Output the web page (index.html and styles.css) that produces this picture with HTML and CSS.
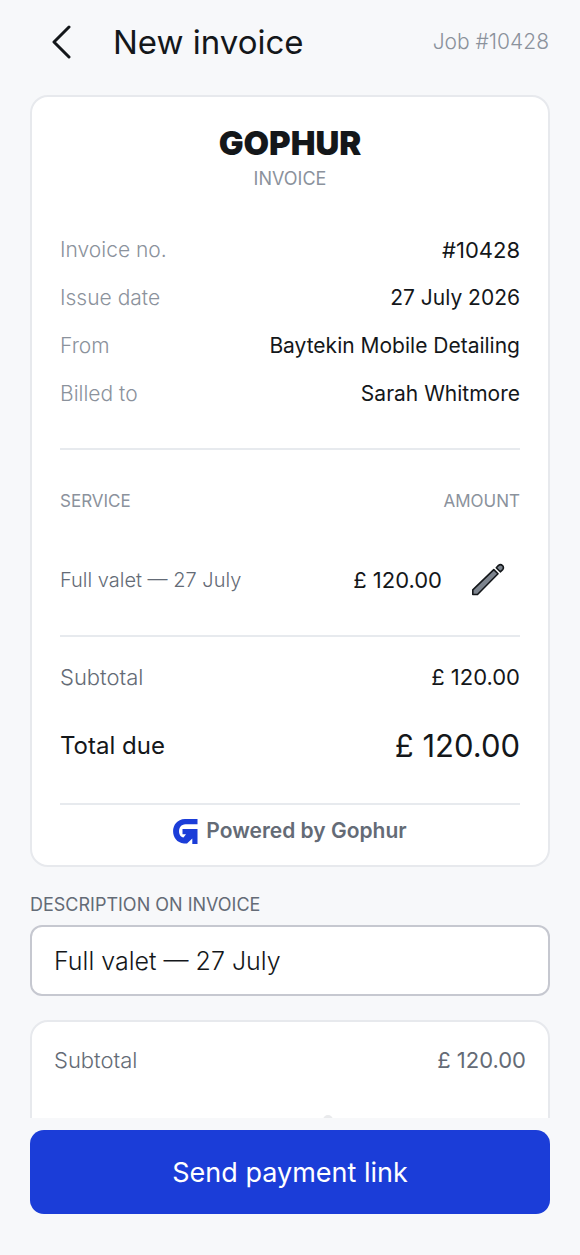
FILE: index.html
```html
<!DOCTYPE html>
<html lang="en-GB">
<head>
  <meta charset="utf-8">
  <meta name="viewport" content="width=device-width, initial-scale=1">
  <title>New invoice</title>
  <link rel="stylesheet" href="styles.css">
</head>
<body>
  <header class="topbar">
    <button class="back" type="button" aria-label="Back">
      <svg width="20" height="34" viewBox="0 0 20 34" fill="none" stroke="currentColor" stroke-width="3" stroke-linecap="round" stroke-linejoin="round"><path d="M17 2 2 17l15 15"/></svg>
    </button>
    <h1 class="title">New invoice</h1>
    <span class="job">Job #10428</span>
  </header>

  <main class="content">
    <article class="card invoice">
      <div class="brand">GOPHUR</div>
      <h2 class="kind">INVOICE</h2>

      <dl class="details">
        <div class="row"><dt>Invoice no.</dt><dd class="figure">#10428</dd></div>
        <div class="row"><dt>Issue date</dt><dd>27 July 2026</dd></div>
        <div class="row"><dt>From</dt><dd>Baytekin Mobile Detailing</dd></div>
        <div class="row"><dt>Billed to</dt><dd>Sarah Whitmore</dd></div>
      </dl>

      <table class="services">
        <thead>
          <tr><th class="name" scope="col">SERVICE</th><th class="amount" scope="col" colspan="2">AMOUNT</th></tr>
        </thead>
        <tbody>
          <tr>
            <td class="name">Full valet — 27 July</td>
            <td class="amount">£ 120.00</td>
            <td class="action">
              <button class="edit" type="button" aria-label="Edit amount">
                <svg width="34" height="34" viewBox="0 0 34 34" fill="#7d848e" stroke="#14171a" stroke-width="1.600" stroke-linejoin="round"><path d="M1.800 31.500v-4.700L22.800 6.600l4.200 4.200L6.500 31.500zM25.300 4.800l2.200-2.400q2-1.500 4 .2 1.700 2 .2 4l-2.400 2.200z"/></svg>
              </button>
            </td>
          </tr>
        </tbody>
      </table>

      <dl class="totals">
        <div class="row"><dt>Subtotal</dt><dd>£ 120.00</dd></div>
        <div class="row due"><dt>Total due</dt><dd>£ 120.00</dd></div>
      </dl>

      <footer class="powered">
        <svg width="25" height="25" viewBox="0 0 25 25" fill="#1b3dd8" aria-hidden="true"><path d="M12 0h12.500v5.200H12.500C4 5.200 4.500 18.500 10.500 18.500l2.500-3.200H9.500V10h15v15h-5.200v-5.500L14 24.500h-3C-3.700 23.500-3.700.5 12 0z"/></svg>
        <span>Powered by Gophur</span>
      </footer>
    </article>

    <div class="field">
      <label for="description">DESCRIPTION ON INVOICE</label>
      <input id="description" type="text" value="Full valet — 27 July">
    </div>

    <section class="card summary">
      <div class="row"><span>Subtotal</span><span class="value">£ 120.00</span></div>
      <svg class="dot" width="10" height="10" viewBox="0 0 10 10" fill="#e9eaec" aria-hidden="true"><circle cx="5" cy="5" r="5"/></svg>
    </section>
  </main>

  <div class="actions">
    <button class="send" type="button">Send payment link</button>
  </div>
</body>
</html>
```
FILE: styles.css
```css
* { box-sizing: border-box; }

body {
  display: flex;
  flex-direction: column;
  height: 100vh;
  margin: 0;
  background: #f7f8fa;
  color: #14171a;
  font: 300 22px/28px Inter, "Liberation Sans", sans-serif;
}

button, input { font: inherit; color: inherit; }
h1, h2, dl, dd { margin: 0; }

.topbar {
  display: flex;
  flex: none;
  align-items: center;
  padding: 16px 31px 27px 30px;
}

.back {
  display: flex;
  justify-content: center;
  width: 64px;
  padding: 9px 0;
  border: 0;
  background: none;
}

.title {
  flex: 1;
  margin-left: 19px;
  font-size: 33px;
  font-weight: 400;
  line-height: 40px;
}

.job { color: #8b929c; font-size: 21px; }

.content {
  flex: 1;
  min-height: 0;
  padding: 0 30px;
  overflow: hidden;
}

.card {
  border: 2px solid #e7e9ed;
  border-radius: 18px;
  background: #fff;
}

.invoice { padding: 28px 28px 20px; }

.brand {
  font-size: 33px;
  font-weight: 900;
  line-height: 36px;
  text-align: center;
}

.kind {
  margin-top: 8px;
  color: #8b929c;
  font-size: 18px;
  font-weight: 400;
  line-height: 20px;
  text-align: center;
}

.row {
  display: flex;
  align-items: center;
  justify-content: space-between;
}

.details {
  display: grid;
  gap: 20px;
  padding: 47px 0 40px;
  border-bottom: 2px solid #e7eaee;
  font-size: 21px;
}

.details dt { color: #8b929c; }
.details dd { font-weight: 400; }
.details .figure { font-size: 22px; }

.services {
  width: 100%;
  border-collapse: collapse;
  border-bottom: 2px solid #e7eaee;
}

.services th {
  padding: 41px 0 37px;
  color: #8b929c;
  font-size: 17px;
  font-weight: 400;
  line-height: 20px;
}

.services td { padding: 0 0 23px; }
.services .name { text-align: left; }
.services td.name { color: #646b76; font-size: 20px; }
.services .amount { text-align: right; }
.services td.amount { font-weight: 400; }
.services .action { width: 78px; padding-left: 14px; }

.edit {
  display: flex;
  align-items: center;
  justify-content: center;
  width: 64px;
  height: 64px;
  padding: 0;
  border: 0;
  background: none;
}

.totals {
  display: grid;
  gap: 35px;
  padding: 26px 0 37px;
  border-bottom: 2px solid #e7eaee;
}

.totals dt { color: #646b76; }
.totals dd { font-weight: 400; }
.totals .due { line-height: 40px; }
.totals .due dt { color: #14171a; font-size: 24px; font-weight: 400; }
.totals .due dd { font-size: 31px; }

.powered {
  display: flex;
  align-items: center;
  justify-content: center;
  gap: 8px;
  padding-top: 12px;
  color: #646b76;
  font-size: 21px;
  font-weight: 600;
}

.field {
  display: grid;
  gap: 8px;
  margin: 26px 0 24px;
}

.field label {
  color: #646b76;
  font-size: 18px;
  font-weight: 400;
  line-height: 24px;
}

.field input {
  width: 100%;
  height: 71px;
  padding: 0 22px;
  border: 2px solid #c6c8d0;
  border-radius: 12px;
  background: #fff;
  font-size: 25px;
}

.summary { padding: 24px 22px 60px; color: #646b76; }
.summary .value { font-weight: 400; }

.dot { display: block; margin: 41px 0 0 57%; }

.actions {
  flex: none;
  padding: 12px 30px 41px;
}

.send {
  width: 100%;
  padding: 23px 22px 21px;
  border: 0;
  border-radius: 14px;
  background: #1b3dd8;
  color: #fff;
  font-size: 27px;
  font-weight: 400;
  line-height: 40px;
}
```
